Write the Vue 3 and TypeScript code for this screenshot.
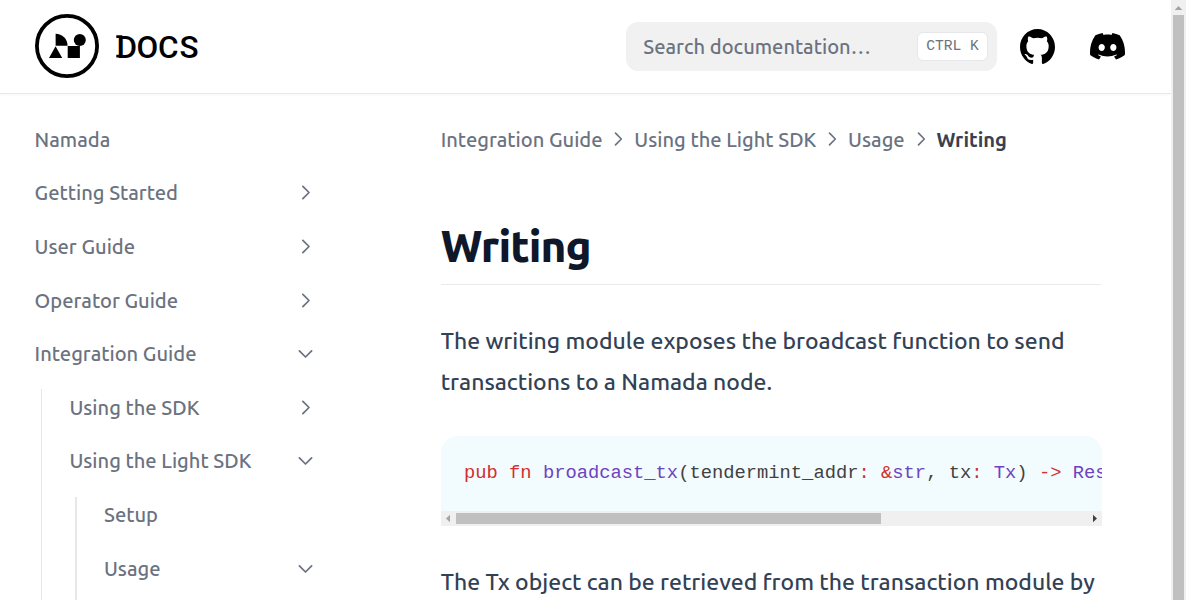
<script setup lang="ts">
interface NavItem {
  label: string
  state?: 'open' | 'closed'
}

interface Token {
  text: string
  kind: 'keyword' | 'type' | 'plain'
}

const nav: NavItem[] = [
  { label: 'Namada' },
  { label: 'Getting Started', state: 'closed' },
  { label: 'User Guide', state: 'closed' },
  { label: 'Operator Guide', state: 'closed' },
  { label: 'Integration Guide', state: 'open' },
]

const subNav: NavItem[] = [
  { label: 'Using the SDK', state: 'closed' },
  { label: 'Using the Light SDK', state: 'open' },
]

const leafNav: NavItem[] = [
  { label: 'Setup' },
  { label: 'Usage', state: 'open' },
]

const crumbs: string[] = ['Integration Guide', 'Using the Light SDK', 'Usage']

const tokens: Token[] = [
  { text: 'pub', kind: 'keyword' },
  { text: ' ', kind: 'plain' },
  { text: 'fn', kind: 'keyword' },
  { text: ' ', kind: 'plain' },
  { text: 'broadcast_tx', kind: 'type' },
  { text: '(tendermint_addr', kind: 'plain' },
  { text: ':', kind: 'keyword' },
  { text: ' ', kind: 'plain' },
  { text: '&', kind: 'keyword' },
  { text: 'str', kind: 'type' },
  { text: ', tx', kind: 'plain' },
  { text: ':', kind: 'keyword' },
  { text: ' ', kind: 'plain' },
  { text: 'Tx', kind: 'type' },
  { text: ') ', kind: 'plain' },
  { text: '->', kind: 'keyword' },
  { text: ' ', kind: 'plain' },
  { text: 'Res', kind: 'type' },
]
</script>

<template>
  <div class="window">
    <div class="page">
      <header class="header">
        <div class="brand">
          <svg class="mark" viewBox="0 0 64 64">
            <circle cx="32" cy="32" r="30.1" fill="none" stroke="#000" stroke-width="3.8" />
            <path d="M20.6 19.8a12 12 0 0 1 12 12h-12z" />
            <path d="M20.6 32.2l6.6 11.8H14z" />
            <rect x="32.7" y="32" width="12.2" height="12" />
            <circle cx="44.8" cy="26" r="6" />
          </svg>
          <svg class="wordmark" viewBox="0 0 86 34">
            <text x="0.6 20.4 42 63.4" y="28.6">DOCS</text>
            <path d="M0.3 6.2h6v2.9h-6zM0.3 25.7h6v2.9h-6z" />
          </svg>
        </div>
        <div class="search">
          <span>Search documentation…</span>
          <kbd>CTRL K</kbd>
        </div>
        <svg class="github" viewBox="3 3 18 18">
          <path d="M12 3C7.0275 3 3 7.12937 3 12.2276C3 16.3109 5.57625 19.7597 9.15374 20.9824C9.60374 21.0631 9.77249 20.7863 9.77249 20.5441C9.77249 20.3249 9.76125 19.5982 9.76125 18.8254C7.5 19.2522 6.915 18.2602 6.735 17.7412C6.63375 17.4759 6.19499 16.6569 5.8125 16.4378C5.4975 16.2647 5.0475 15.838 5.80124 15.8264C6.51 15.8149 7.01625 16.4954 7.18499 16.7723C7.99499 18.1679 9.28875 17.7758 9.80625 17.5335C9.885 16.9337 10.1212 16.53 10.38 16.2993C8.3775 16.0687 6.285 15.2728 6.285 11.7432C6.285 10.7397 6.63375 9.9092 7.20749 9.26326C7.1175 9.03257 6.8025 8.08674 7.2975 6.81794C7.2975 6.81794 8.05125 6.57571 9.77249 7.76377C10.4925 7.55615 11.2575 7.45234 12.0225 7.45234C12.7875 7.45234 13.5525 7.55615 14.2725 7.76377C15.9937 6.56418 16.7475 6.81794 16.7475 6.81794C17.2424 8.08674 16.9275 9.03257 16.8375 9.26326C17.4113 9.9092 17.76 10.7281 17.76 11.7432C17.76 15.2843 15.6563 16.0687 13.6537 16.2993C13.98 16.5877 14.2613 17.1414 14.2613 18.0065C14.2613 19.2407 14.25 20.2326 14.25 20.5441C14.25 20.7863 14.4188 21.0746 14.8688 20.9824C16.6554 20.364 18.2079 19.1866 19.3078 17.6162C20.4077 16.0457 20.9995 14.1611 21 12.2276C21 7.12937 16.9725 3 12 3Z" />
        </svg>
        <svg class="discord" viewBox="0 5 30.67 23.25">
          <path d="M26.0015 6.9529C24.0021 6.03845 21.8787 5.37198 19.6623 5C19.3833 5.48048 19.0733 6.13144 18.8563 6.64292C16.4989 6.30193 14.1585 6.30193 11.8336 6.64292C11.6166 6.13144 11.2911 5.48048 11.0276 5C8.79575 5.37198 6.67235 6.03845 4.6869 6.9529C0.672601 12.8736 -0.41235 18.6548 0.130124 24.3585C2.79599 26.2959 5.36889 27.4739 7.89682 28.2489C8.51679 27.4119 9.07477 26.5129 9.55525 25.5675C8.64079 25.2265 7.77283 24.808 6.93587 24.312C7.15286 24.1571 7.36986 23.9866 7.57135 23.8161C12.6241 26.1255 18.0969 26.1255 23.0876 23.8161C23.3046 23.9866 23.5061 24.1571 23.7231 24.312C22.8861 24.808 22.0182 25.2265 21.1037 25.5675C21.5842 26.5129 22.1422 27.4119 22.7621 28.2489C25.2885 27.4739 27.8769 26.2959 30.5288 24.3585C31.1952 17.7559 29.4733 12.0212 26.0015 6.9529ZM10.2527 20.8402C8.73376 20.8402 7.49382 19.4608 7.49382 17.7714C7.49382 16.082 8.70276 14.7025 10.2527 14.7025C11.7871 14.7025 13.0425 16.082 13.0115 17.7714C13.0115 19.4608 11.7871 20.8402 10.2527 20.8402ZM20.4373 20.8402C18.9183 20.8402 17.6768 19.4608 17.6768 17.7714C17.6768 16.082 18.8873 14.7025 20.4373 14.7025C21.9717 14.7025 23.2271 16.082 23.1961 17.7714C23.1961 19.4608 21.9872 20.8402 20.4373 20.8402Z" />
        </svg>
      </header>

      <div class="body">
        <nav class="sidebar">
          <div v-for="item in nav" :key="item.label" class="item">
            <span>{{ item.label }}</span>
            <svg v-if="item.state" class="chevron" :class="item.state" viewBox="0 0 24 24"><path d="M9 5l7 7-7 7" /></svg>
          </div>
          <div class="group outer">
            <div v-for="item in subNav" :key="item.label" class="item">
              <span>{{ item.label }}</span>
              <svg class="chevron" :class="item.state" viewBox="0 0 24 24"><path d="M9 5l7 7-7 7" /></svg>
            </div>
            <div class="group inner">
              <div v-for="item in leafNav" :key="item.label" class="item">
                <span>{{ item.label }}</span>
                <svg v-if="item.state" class="chevron" :class="item.state" viewBox="0 0 24 24"><path d="M9 5l7 7-7 7" /></svg>
              </div>
            </div>
          </div>
        </nav>

        <main class="content">
          <div class="crumbs">
            <template v-for="crumb in crumbs" :key="crumb">
              <span>{{ crumb }}</span>
              <svg class="separator" viewBox="0 0 24 24"><path d="M9 5l7 7-7 7" /></svg>
            </template>
            <strong>Writing</strong>
          </div>
          <h1>Writing</h1>
          <p>The writing module exposes the broadcast function to send transactions to a Namada node.</p>
          <div class="code">
            <pre><span v-for="(token, i) in tokens" :key="i" :class="token.kind">{{ token.text }}</span></pre>
            <div class="hbar">
              <svg class="arrow" viewBox="0 0 15 15"><path d="M5 7.5l4-3.8v7.6z" fill="#a3a3a3" /></svg>
              <div class="htrack"><div class="hthumb"></div></div>
              <svg class="arrow" viewBox="0 0 15 15"><path d="M10 7.5l-4-3.8v7.6z" fill="#404040" /></svg>
            </div>
          </div>
          <p>The Tx object can be retrieved from the transaction module by</p>
        </main>
      </div>
    </div>
    <div class="vbar">
      <svg class="arrow" viewBox="0 0 15 15"><path d="M7.5 6l3.8 4H3.7z" fill="#a3a3a3" /></svg>
      <div class="vthumb"></div>
    </div>
  </div>
</template>

<style>
body {
  margin: 0;
  overflow: hidden;
}
</style>

<style scoped>
.window {
  display: flex;
  height: 600px;
  overflow: hidden;
  background: #fff;
  font-family: Ubuntu, "Noto Sans", sans-serif;
  font-size: 20.125px;
  font-weight: 500;
  color: #6b7280;
}
svg {
  display: block;
  flex: none;
}
.page {
  width: 1171px;
  height: 600px;
  overflow: hidden;
}
.header {
  box-sizing: border-box;
  height: 93px;
  display: flex;
  align-items: center;
  padding: 0 46px 0 35px;
  box-shadow: 0 1px 0 #e8e8e8, 0 2px 3px rgba(0, 0, 0, 0.03);
}
.brand {
  display: flex;
  align-items: center;
  gap: 17px;
  margin-right: auto;
  padding-bottom: 1px;
}
.mark {
  width: 64px;
  height: 64px;
}
.wordmark {
  width: 86px;
  height: 34px;
  overflow: visible;
}
.wordmark text {
  font: 500 31.5px Roboto, sans-serif;
}
.search {
  box-sizing: border-box;
  width: 371px;
  height: 49px;
  border-radius: 12px;
  background: #f1f1f1;
  display: flex;
  align-items: center;
  justify-content: space-between;
  padding: 0 9px 0 17.3px;
}
kbd {
  box-sizing: border-box;
  width: 71px;
  height: 29px;
  border: 1px solid #e5e7eb;
  border-radius: 6px;
  background: #fff;
  font: 14.65px/26px "Liberation Mono", monospace;
  text-align: center;
}
.github {
  width: 35px;
  height: 35px;
  margin-left: 23px;
}
.discord {
  width: 35px;
  height: 26.6px;
  margin-left: 35px;
}
.body {
  display: flex;
}
.sidebar {
  width: 281.4px;
  padding: 19.5px 0 0 34.6px;
}
.item {
  height: 53.6px;
  display: flex;
  align-items: center;
  justify-content: space-between;
}
.chevron {
  width: 21px;
  height: 21px;
}
.chevron path,
.separator path {
  fill: none;
  stroke: currentColor;
  stroke-width: 2;
  stroke-linecap: round;
  stroke-linejoin: round;
}
.chevron.open {
  transform: rotate(90deg);
}
.group {
  display: flow-root;
  border-left: 1px solid #e5e7eb;
}
.outer {
  margin: 9px 0 0 6.4px;
  padding-left: 27.4px;
}
.outer > .item:first-child,
.inner > .item:first-child {
  margin-top: -9px;
}
.inner {
  border-left-width: 2px;
  margin: 9px 0 0 5.6px;
  padding: 0 0 40px 27px;
}
.content {
  width: 661px;
  margin-left: 124.7px;
  padding-top: 33px;
}
.crumbs {
  height: 26px;
  display: flex;
  align-items: center;
}
.crumbs strong {
  font-weight: 700;
  color: #374151;
}
.separator {
  width: 20px;
  height: 20px;
  margin: 0 5.9px;
}
h1 {
  box-sizing: border-box;
  height: 76px;
  margin: 57px 1px 35px 0;
  padding-top: 9px;
  border-bottom: 1px solid #e9eaeb;
  font-size: 44px;
  line-height: 56px;
  letter-spacing: -0.95px;
  font-weight: 800;
  color: #0f172a;
}
p {
  margin: 0;
  font-size: 22.98px;
  line-height: 41px;
  color: #334155;
}
.code {
  margin: 34px 0 35px;
}
pre {
  box-sizing: border-box;
  height: 75px;
  margin: 0;
  padding: 23px 0 0 23.3px;
  overflow: hidden;
  border-radius: 17px 17px 0 0;
  background: #f2fbfd;
  font: 18.8px/28px "Liberation Mono", monospace;
}
.keyword {
  color: #d32f2f;
}
.type {
  color: #6f42c1;
}
.plain {
  color: #414141;
}
.hbar {
  display: flex;
  height: 15px;
  background: #f0f0f0;
}
.arrow {
  width: 15px;
  height: 15px;
}
.htrack {
  flex: 1;
  padding: 2px 0;
}
.hthumb {
  width: 425px;
  height: 11px;
  background: #c0c0c0;
}
.vbar {
  width: 15px;
  background: #f0f0f0;
}
.vthumb {
  width: 11px;
  height: 600px;
  margin-left: 2px;
  background: #c0c0c0;
}
</style>
